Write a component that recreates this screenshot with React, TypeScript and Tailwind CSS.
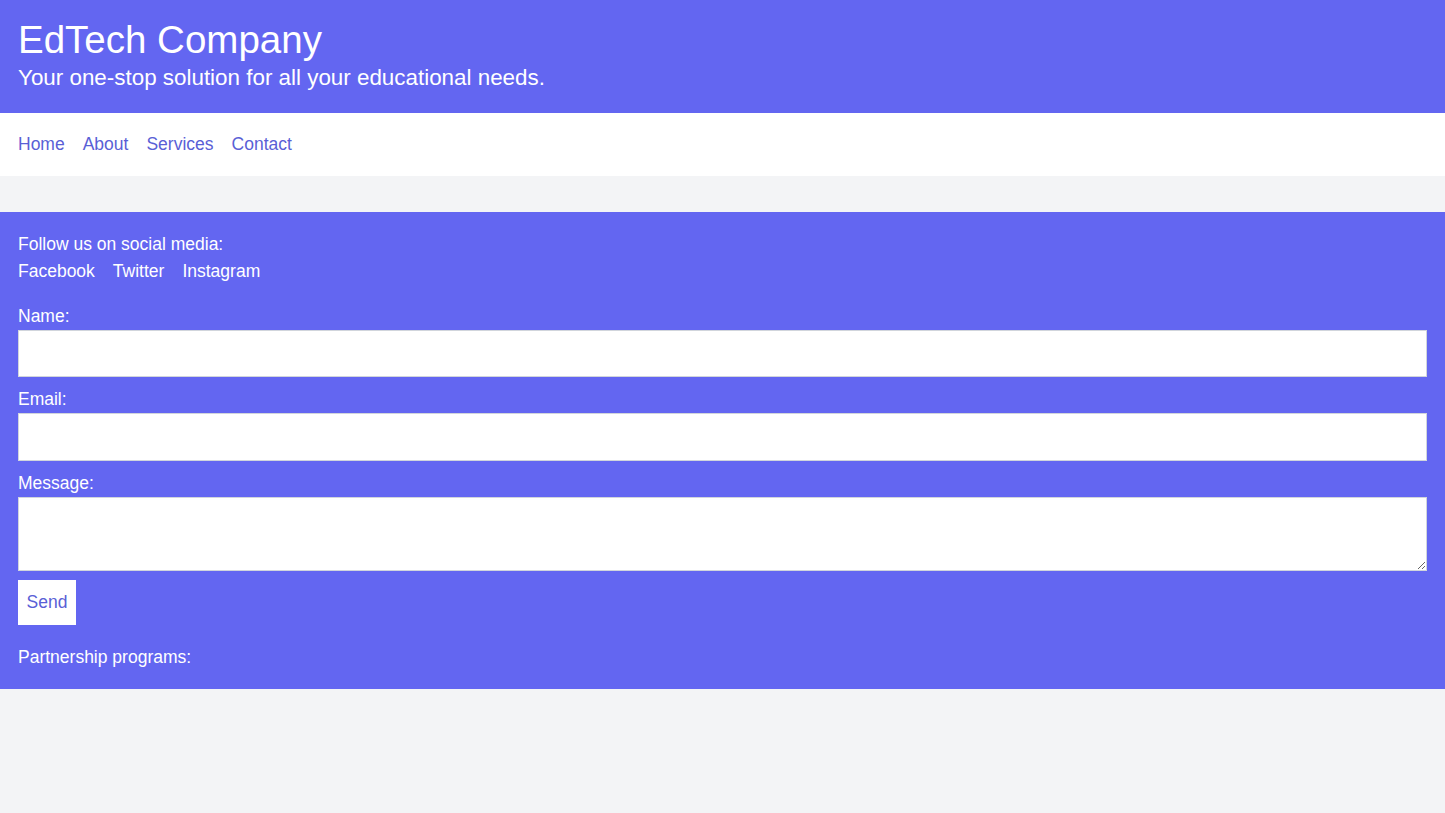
export default function App() {
  return (
    <div className="min-h-[813px] bg-gray-100 font-['Liberation_Sans',Arial,sans-serif] text-[17.5px] leading-[27px]">
      <header className="bg-[#6366f1] px-[18px] pb-[21px] pt-[16px] text-white">
        <h1 className="text-[38.5px] leading-[48px]">EdTech Company</h1>
        <p className="text-[22.4px] leading-[28px]">Your one-stop solution for all your educational needs.</p>
      </header>
      <nav className="bg-white px-[18px] py-[18px]">
        <ul className="flex gap-[18px] text-[#5a5fd6]">
          <li><a href="#">Home</a></li>
          <li><a href="#">About</a></li>
          <li><a href="#">Services</a></li>
          <li><a href="#">Contact</a></li>
        </ul>
      </nav>
      <footer className="mt-[36px] bg-[#6366f1] px-[18px] pb-[18px] pt-[19px] text-white">
        <p>Follow us on social media:</p>
        <ul className="flex gap-[18px]">
          <li><a href="#">Facebook</a></li>
          <li><a href="#">Twitter</a></li>
          <li><a href="#">Instagram</a></li>
        </ul>
        <form className="mt-[18px] flex flex-col">
          <label>Name:</label>
          <input type="text" className="h-[47px] w-full border border-gray-300 bg-white" />
          <label className="mt-[9px]">Email:</label>
          <input type="email" className="h-[48px] w-full border border-gray-300 bg-white" />
          <label className="mt-[9px]">Message:</label>
          <textarea className="h-[74px] w-full border border-gray-300 bg-white" />
          <button type="submit" className="mt-[9px] h-[45px] w-[58px] bg-white text-[#5a5fd6]">Send</button>
        </form>
        <p className="mt-[19px]">Partnership programs:</p>
      </footer>
    </div>
  );
}
